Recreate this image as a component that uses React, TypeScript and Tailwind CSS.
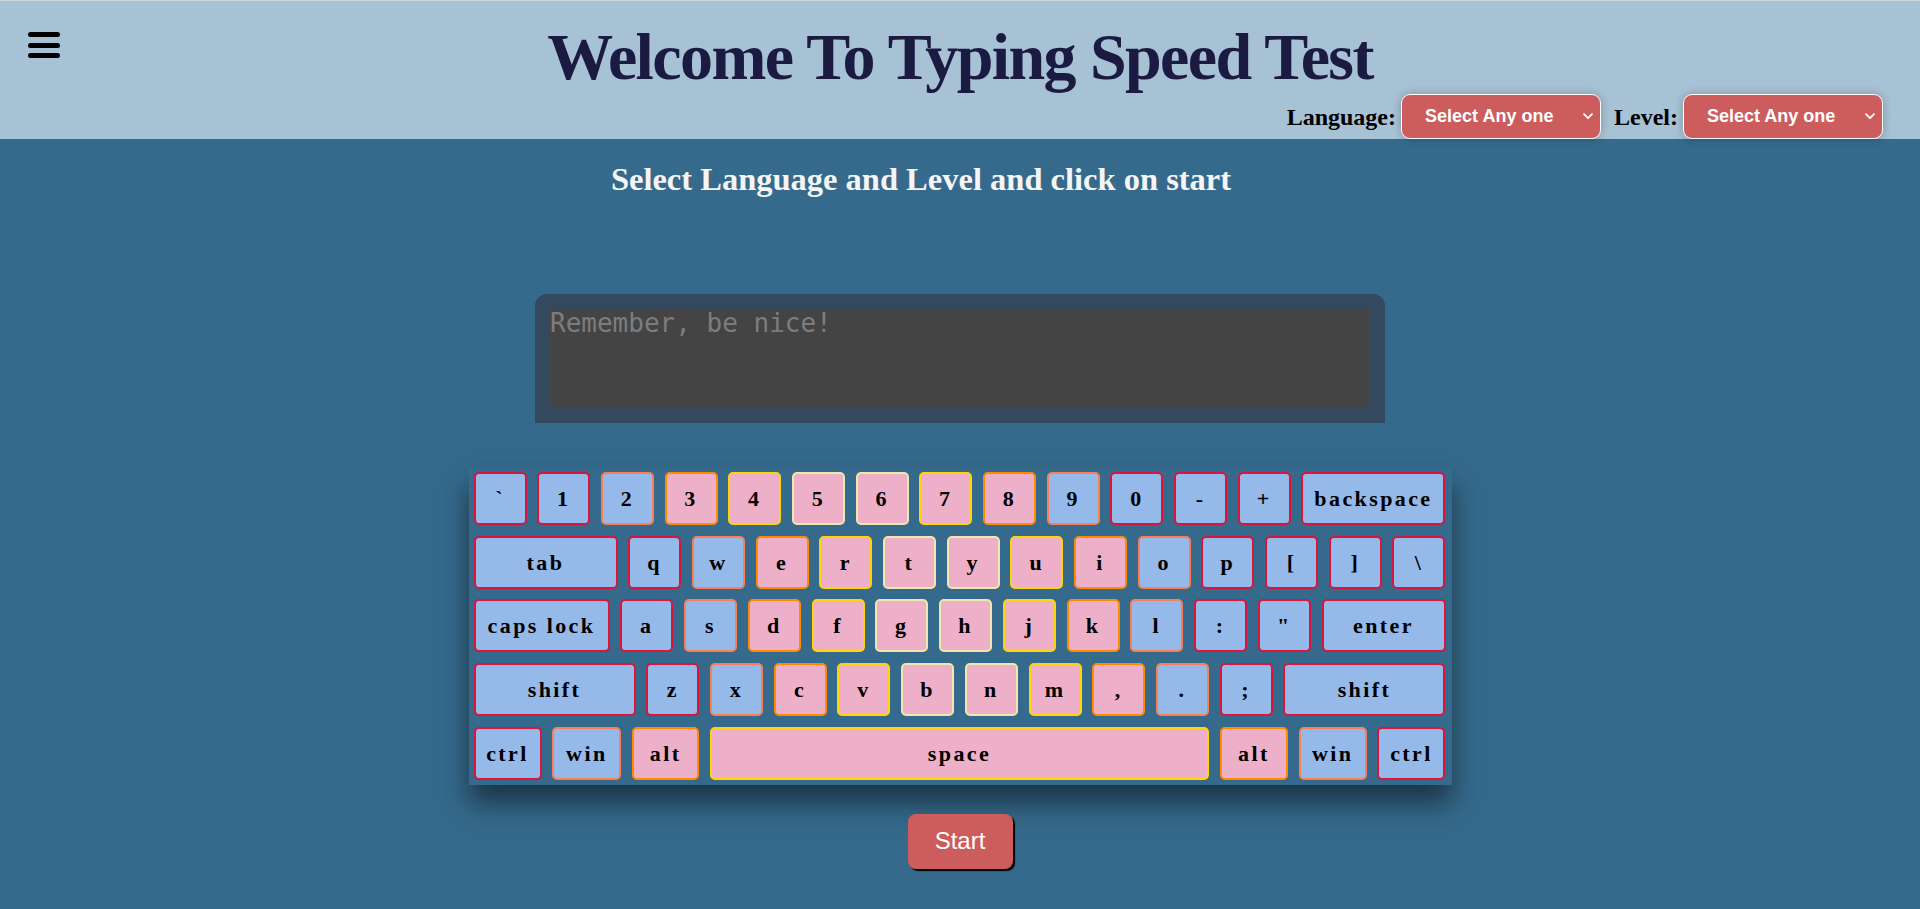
const SERIF = "font-['Liberation_Serif','Times_New_Roman',serif]";

// finger groups: border colour + key fill
const TONES = {
  pinky: "bg-[#95b9e8] border-[#dc143c]",
  ring: "bg-[#95b9e8] border-[#fa7f55]",
  middle: "bg-[#eeafc9] border-[#ff8c00]",
  index: "bg-[#eeafc9] border-[#ffd700]",
  inner: "bg-[#eeafc9] border-[#eee8aa]",
} as const;

type Tone = keyof typeof TONES;
type Key = { label: string; tone: Tone; w?: string };

const k = (label: string, tone: Tone, w?: string): Key => ({ label, tone, w });

const ROWS: Key[][] = [
  [
    k("`", "pinky"), k("1", "pinky"), k("2", "ring"), k("3", "middle"), k("4", "index"),
    k("5", "inner"), k("6", "inner"), k("7", "index"), k("8", "middle"), k("9", "ring"),
    k("0", "pinky"), k("-", "pinky"), k("+", "pinky"), k("backspace", "pinky", "w-[144px]"),
  ],
  [
    k("tab", "pinky", "w-[144px]"), k("q", "pinky"), k("w", "ring"), k("e", "middle"),
    k("r", "index"), k("t", "inner"), k("y", "inner"), k("u", "index"), k("i", "middle"),
    k("o", "ring"), k("p", "pinky"), k("[", "pinky"), k("]", "pinky"), k("\\", "pinky"),
  ],
  [
    k("caps lock", "pinky", "w-[136px]"), k("a", "pinky"), k("s", "ring"), k("d", "middle"),
    k("f", "index"), k("g", "inner"), k("h", "inner"), k("j", "index"), k("k", "middle"),
    k("l", "ring"), k(":", "pinky"), k('"', "pinky"), k("enter", "pinky", "w-[124px]"),
  ],
  [
    k("shift", "pinky", "w-[162px]"), k("z", "pinky"), k("x", "ring"), k("c", "middle"),
    k("v", "index"), k("b", "inner"), k("n", "inner"), k("m", "index"), k(",", "middle"),
    k(".", "ring"), k(";", "pinky"), k("shift", "pinky", "w-[162px]"),
  ],
  [
    k("ctrl", "pinky", "w-[68px]"), k("win", "ring", "w-[69px]"), k("alt", "middle", "w-[67px]"),
    k("space", "index", "w-[499px]"), k("alt", "middle", "w-[68px]"), k("win", "ring", "w-[68px]"),
    k("ctrl", "pinky", "w-[68px]"),
  ],
];

function Chevron() {
  return (
    <svg width="10" height="7" viewBox="0 0 10 7" fill="none" className="shrink-0">
      <path d="M1 1.2 5 5.2 9 1.2" stroke="white" strokeWidth="1.8" strokeLinecap="round" strokeLinejoin="round" />
    </svg>
  );
}

function FakeSelect() {
  return (
    <div className="flex items-center justify-between w-[200px] h-[45px] pl-[23px] pr-[7px] rounded-[9px] border border-white bg-[#cd5c5c] shadow-[0_0_8px_rgba(0,0,0,0.25)] text-white font-bold text-[18px] font-['Liberation_Sans',Arial,sans-serif]">
      <span>Select Any one</span>
      <Chevron />
    </div>
  );
}

function Header() {
  return (
    <header className="bg-[#a7c2d5] border-t border-[#d2d2d2] h-[139px] flex flex-col">
      <div className="grid grid-cols-[1fr_auto_1fr] h-[93px]">
        <div className="pl-[28px] pt-[31px]">
          <div className="flex flex-col gap-[5.5px] w-[32px]">
            <span className="h-[5px] rounded-full bg-black" />
            <span className="h-[5px] rounded-full bg-black" />
            <span className="h-[5px] rounded-full bg-black" />
          </div>
        </div>
        <h1 className={`${SERIF} pt-[23px] text-[66px] leading-none font-bold tracking-[-1.6px] text-[#1b1a40]`}>
          Welcome To Typing Speed Test
        </h1>
        <div />
      </div>
      <div className={`${SERIF} flex items-center justify-end h-[45px] pr-[37px] text-[24px] font-bold text-black`}>
        <span className="mr-[5px]">Language:</span>
        <FakeSelect />
        <span className="ml-[13px] mr-[5px]">Level:</span>
        <FakeSelect />
      </div>
    </header>
  );
}

function Keyboard() {
  return (
    <div className="w-[983px] pl-[5px] pr-[6px] py-[5px] bg-[#356a8c] shadow-[0_18px_26px_rgba(0,0,0,0.5)] flex flex-col gap-[10.75px]">
      {ROWS.map((row, ri) => (
        <div key={ri} className="flex justify-between">
          {row.map((key, ki) => (
            <div
              key={ki}
              className={`${key.w ?? "w-[53px]"} h-[53px] flex items-center justify-center rounded-[5px] border-2 ${TONES[key.tone]} ${SERIF} text-[22px] font-bold tracking-[2.4px] text-black`}
            >
              {key.label}
            </div>
          ))}
        </div>
      ))}
    </div>
  );
}

export default function App() {
  return (
    <div className="min-h-[909px] bg-[#356a8c] flex flex-col">
      <Header />
      <main className="flex flex-col items-center">
        <h2 className={`${SERIF} w-full pt-[16px] pr-[78px] text-center text-[32.5px] font-bold text-[#f5f5f5]`}>
          Select Language and Level and click on start
        </h2>

        <div className="mt-[90px] w-[850px] rounded-t-[12px] bg-[#34495e] px-[15px] pt-[15px] pb-[15px]">
          <textarea
            placeholder="Remember, be nice!"
            className="block w-full h-[99px] resize-none bg-[#444444] outline-none font-['DejaVu_Sans_Mono',monospace] text-[26px] leading-[1.15] text-[#ddd] placeholder:text-[#7d7d7d]"
          />
        </div>

        <div className="mt-[44px]">
          <Keyboard />
        </div>

        <button className="mt-[29px] w-[105px] h-[55px] rounded-[8px] bg-[#cd5c5c] shadow-[2px_2px_1px_#000] text-white text-[24px] font-['Liberation_Sans',Arial,sans-serif]">
          Start
        </button>
      </main>
    </div>
  );
}
